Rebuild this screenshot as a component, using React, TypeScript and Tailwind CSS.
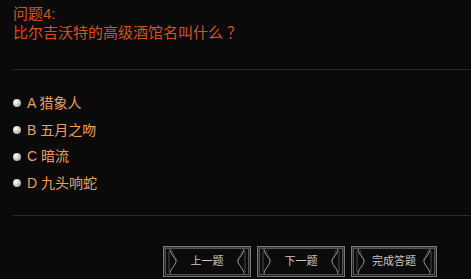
import React from 'react';

const options = ['A 猎象人', 'B 五月之吻', 'C 暗流', 'D 九头响蛇'];

const Bracket: React.FC<{ flip?: boolean }> = ({ flip }) => (
    <svg width="10" height="27" viewBox="0 0 10 27" className={flip ? 'scale-x-[-1]' : ''}>
        <path d="M2 1 C2 6 8 10 8 13.5 C8 17 2 21 2 26" fill="none" stroke="#9a9a9a" strokeWidth="1" />
        <path d="M4 2 C4 7 9 10 9 13.5" fill="none" stroke="#555" strokeWidth="0.8" />
        <path d="M1 3 L1 24" fill="none" stroke="#4a4a4a" strokeWidth="1" />
    </svg>
);

const FrameButton: React.FC<{ label: string; width: string }> = ({ label, width }) => (
    <button className={`${width} h-[31px] p-[1px] border border-[#7a7a7a] bg-[linear-gradient(#3a3a3a,#1e1e1e)] shadow-[0_1px_2px_rgba(0,0,0,0.8)]`}>
        <div className="h-full flex items-center justify-between border border-[#555] bg-[#0b0b0b] px-[2px]">
            <Bracket />
            <span className="text-[11px] text-[#c8c8c8]">{label}</span>
            <Bracket flip />
        </div>
    </button>
);

const App: React.FC = () => {
    return (
        <div className="w-[471px] h-[279px] bg-[#0a0a0a] overflow-hidden font-['Liberation_Sans','Noto_Sans_CJK_SC',sans-serif]">
            <div className="pl-[13px] pt-[5px] text-[15px] leading-[18px] text-[#d4521e]">
                <p>问题4:</p>
                <p>
                    比尔吉沃特的高级酒馆名叫什么<span className="ml-[4px] font-['Noto_Sans_CJK_SC',sans-serif]">？</span>
                </p>
            </div>
            <div className="ml-[13px] mt-[27px] h-px bg-[#2a2a2a]" />
            <div className="mt-[20px] flex flex-col">
                {options.map((o) => (
                    <div key={o} className="flex items-center h-[26.7px] pl-[13px]">
                        <span className="w-[8px] h-[8px] rounded-full bg-[radial-gradient(circle_at_35%_35%,#ffffff,#bdbdbd_60%,#8a8a8a)] mr-[6px]" />
                        <span className="text-[14px] text-[#e8a062]">{o}</span>
                    </div>
                ))}
            </div>
            <div className="ml-[13px] mt-[18px] h-px bg-[#2a2a2a]" />
            <div className="mt-[30px] flex pl-[163px] gap-[6px]">
                <FrameButton label="上一题" width="w-[88px]" />
                <FrameButton label="下一题" width="w-[88px]" />
                <FrameButton label="完成答题" width="w-[86px]" />
            </div>
        </div>
    );
};

export default App;
